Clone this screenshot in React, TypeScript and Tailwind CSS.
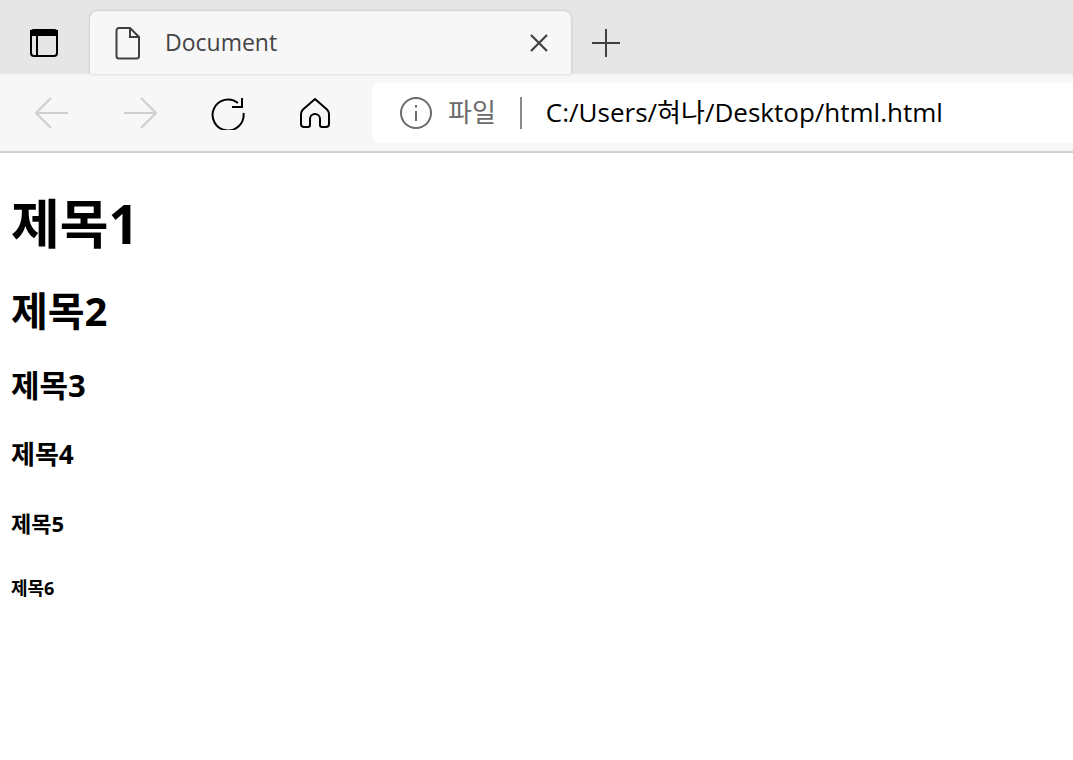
const headingFont = "font-['Open_Sans','Noto_Sans_CJK_KR',sans-serif] font-bold text-black";
const chromeFont = "font-['Open_Sans','Noto_Sans_CJK_KR',sans-serif]";

function SidebarIcon() {
  return (
    <svg width="30" height="30" viewBox="0 0 30 30" fill="none" stroke="#000" strokeWidth="2">
      <rect x="2" y="2" width="26" height="26" rx="3" />
      <path d="M2 7 H28 V3 H2 Z" fill="#000" />
      <path d="M8 8 V28" />
    </svg>
  );
}

function FileIcon() {
  return (
    <svg width="26" height="34" viewBox="0 0 26 34" fill="none" stroke="#404040" strokeWidth="2">
      <path d="M4 2 H15 L24 11 V30 a2.500 2.500 0 0 1 -2.500 2.500 H4 a2.500 2.500 0 0 1 -2.500 -2.500 V4.500 A2.500 2.500 0 0 1 4 2 Z" />
      <path d="M15 2 V11 H24" />
    </svg>
  );
}

function ArrowIcon({ flip }: { flip?: boolean }) {
  return (
    <svg width="34" height="32" viewBox="0 0 34 32" fill="none" stroke="#cfcfcf" strokeWidth="2" className={flip ? '-scale-x-100' : ''}>
      <path d="M1 16 H33 M16 1 L1 16 L16 31" />
    </svg>
  );
}

function ReloadIcon() {
  return (
    <svg width="34" height="34" viewBox="0 0 34 34" fill="none" stroke="#000" strokeWidth="2">
      <path d="M27 7 A15.500 15.500 0 1 0 32.500 17" />
      <path d="M31 2 V11 H21" />
    </svg>
  );
}

function HomeIcon() {
  return (
    <svg width="30" height="32" viewBox="0 0 30 32" fill="none" stroke="#000" strokeWidth="2">
      <path d="M15 2 L27 12.500 Q29 14.500 29 17 V27 Q29 30 26 30 H22 Q20 30 20 28 V22 A5 5 0 0 0 10 22 V28 Q10 30 8 30 H4 Q1 30 1 27 V17 Q1 14.500 3 12.500 Z" />
    </svg>
  );
}

function InfoIcon() {
  return (
    <svg width="32" height="32" viewBox="0 0 32 32" fill="none" stroke="#6b6b6b" strokeWidth="2">
      <circle cx="16" cy="16" r="15" />
      <path d="M16 14 V24 M16 8 V10.500" />
    </svg>
  );
}

function TabStrip() {
  return (
    <div className="h-[74px] bg-[#e6e6e6] flex items-end">
      <div className="w-[90px] h-full flex items-center justify-center pt-[12px] pr-[2px]">
        <SidebarIcon />
      </div>
      <div className="w-[481px] h-[63px] bg-[#f7f7f7] rounded-t-[8px] shadow-[0_0_3px_rgba(0,0,0,0.2)] flex items-center pl-[25px] pr-[23px]">
        <FileIcon />
        <span className={`${chromeFont} ml-[24px] text-[23px] text-[#444] flex-1`}>Document</span>
        <svg width="18" height="18" viewBox="0 0 18 18" stroke="#404040" strokeWidth="2.200">
          <path d="M1 1 L17 17 M17 1 L1 17" />
        </svg>
      </div>
      <div className="ml-[20px] h-[63px] flex items-center">
        <svg width="30" height="30" viewBox="0 0 30 30" stroke="#404040" strokeWidth="2">
          <path d="M15 1 V29 M1 15 H29" />
        </svg>
      </div>
    </div>
  );
}

function Toolbar() {
  return (
    <div className="h-[79px] bg-[#f7f7f7] border-b-2 border-[#d2d2d2] flex items-center">
      <div className="w-[372px] flex items-center pl-[35px]">
        <ArrowIcon />
        <div className="ml-[54px]"><ArrowIcon flip /></div>
        <div className="ml-[54px]"><ReloadIcon /></div>
        <div className="ml-[55px]"><HomeIcon /></div>
      </div>
      <div className="flex-1 h-[60px] bg-white rounded-l-[8px] flex items-center pl-[28px]">
        <InfoIcon />
        <span className={`${chromeFont} ml-[16px] text-[26px] text-[#6b6b6b]`}>파일</span>
        <div className="ml-[24px] w-[2px] h-[32px] bg-[#8a8a8a]" />
        <span className={`${chromeFont} ml-[24px] text-[26px] text-black`}>C:/Users/혀나/Desktop/html.html</span>
      </div>
    </div>
  );
}

export default function App() {
  return (
    <div className="w-[1073px] h-[760px] overflow-hidden bg-white">
      <TabStrip />
      <Toolbar />
      <div className="px-[11px] pt-[35px]">
        <h1 className={`${headingFont} text-[53px] leading-[72px]`}>제목1</h1>
        <h2 className={`${headingFont} mt-[24px] text-[40px] leading-[54px]`}>제목2</h2>
        <h3 className={`${headingFont} mt-[26px] text-[31px] leading-[42px]`}>제목3</h3>
        <h4 className={`${headingFont} mt-[30px] text-[26px] leading-[36px]`}>제목4</h4>
        <h5 className={`${headingFont} mt-[36px] text-[22px] leading-[30px]`}>제목5</h5>
        <h6 className={`${headingFont} mt-[38px] text-[18px] leading-[24px]`}>제목6</h6>
      </div>
    </div>
  );
}
